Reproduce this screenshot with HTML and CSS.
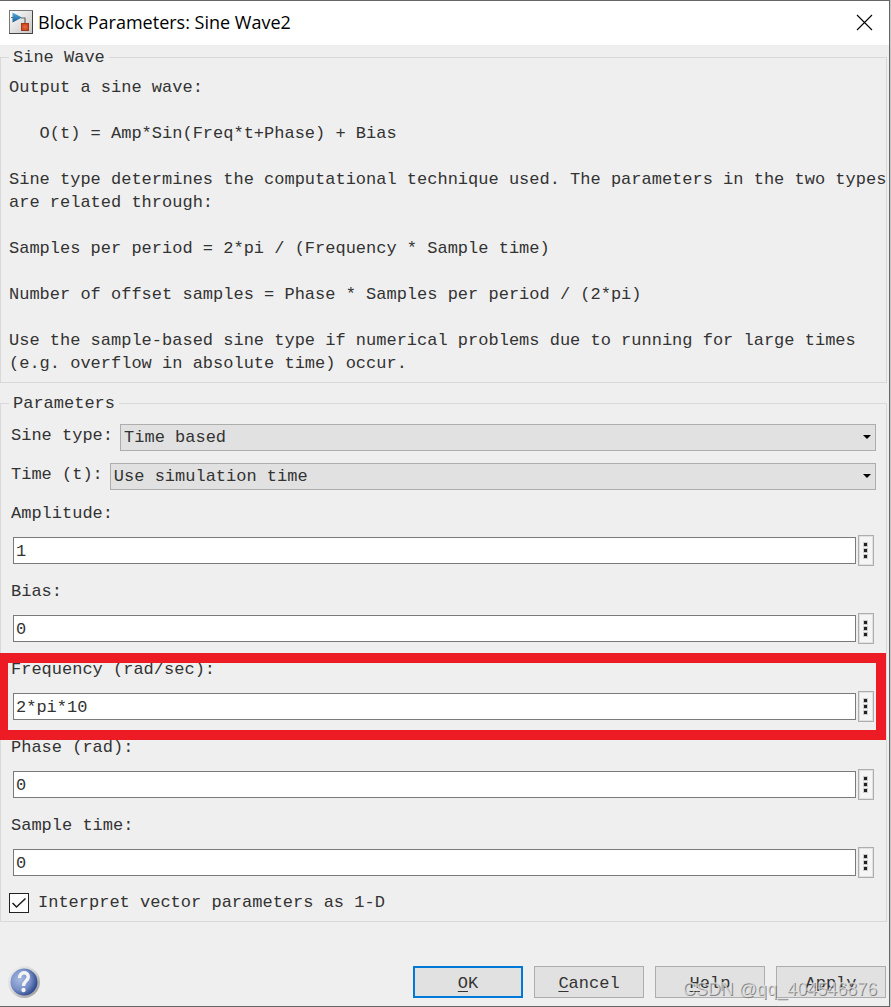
FILE: index.html
```html
<!DOCTYPE html>
<html lang="en">
<head>
    <meta charset="UTF-8">
    <meta name="viewport" content="width=device-width, initial-scale=1.0">
    <link rel="stylesheet" href="styles.css">
    <title>Block Parameters: Sine Wave2</title>
</head>
<body>
    <div class="window">
        <header class="titlebar">
            <svg class="app-icon" width="24" height="24" viewBox="0 0 24 24">
                <defs>
                    <linearGradient id="paper" x1="0" y1="0" x2="1" y2="1">
                        <stop offset="0" stop-color="#ffffff"/>
                        <stop offset="1" stop-color="#c4c4c4"/>
                    </linearGradient>
                    <linearGradient id="tri" x1="0" y1="0" x2="0" y2="1">
                        <stop offset="0" stop-color="#57aedb"/>
                        <stop offset="1" stop-color="#135b92"/>
                    </linearGradient>
                    <radialGradient id="block">
                        <stop offset="0" stop-color="#ee6a3c"/>
                        <stop offset="1" stop-color="#c8451c"/>
                    </radialGradient>
                </defs>
                <rect x="0.5" y="0.5" width="23" height="23" fill="url(#paper)" stroke="#777"/>
                <path d="M0 23.5H23.5V1" fill="none" stroke="#444"/>
                <path d="M2 7.500H4M12 8H16V13" fill="none" stroke="#666" stroke-width="1.200"/>
                <path d="M3.500 2.500L13 7.500L3.500 12.500Z" fill="url(#tri)"/>
                <rect x="12.500" y="13.500" width="7" height="7" fill="url(#block)" stroke="#a33a18"/>
            </svg>
            <h1 class="title">Block Parameters: Sine Wave2</h1>
            <button class="close" type="button" aria-label="Close">
                <svg width="17" height="17" viewBox="0 0 17 17">
                    <path d="M1 1L16 16M16 1L1 16" stroke="#000" stroke-width="1.100"/>
                </svg>
            </button>
        </header>

        <form class="dialog">
            <fieldset class="group">
                <legend>Sine Wave</legend>
                <p class="description">Output a sine wave:

   O(t) = Amp*Sin(Freq*t+Phase) + Bias

Sine type determines the computational technique used. The parameters in the two types
are related through:

Samples per period = 2*pi / (Frequency * Sample time)

Number of offset samples = Phase * Samples per period / (2*pi)

Use the sample-based sine type if numerical problems due to running for large times
(e.g. overflow in absolute time) occur.</p>
            </fieldset>

            <fieldset class="group params">
                <legend>Parameters</legend>
                <div class="choice">
                    <label for="sinetype">Sine type:</label>
                    <div class="dropdown">
                        <select id="sinetype">
                            <option>Time based</option>
                        </select>
                    </div>
                </div>
                <div class="choice">
                    <label for="time">Time (t):</label>
                    <div class="dropdown">
                        <select id="time">
                            <option>Use simulation time</option>
                        </select>
                    </div>
                </div>

                <div class="field">
                    <label for="amplitude">Amplitude:</label>
                    <div class="entry">
                        <input type="text" id="amplitude" value="1">
                        <button class="more" type="button" aria-label="Amplitude options"><i></i><i></i><i></i></button>
                    </div>
                </div>
                <div class="field">
                    <label for="bias">Bias:</label>
                    <div class="entry">
                        <input type="text" id="bias" value="0">
                        <button class="more" type="button" aria-label="Bias options"><i></i><i></i><i></i></button>
                    </div>
                </div>
                <div class="field marked">
                    <label for="frequency">Frequency (rad/sec):</label>
                    <div class="entry">
                        <input type="text" id="frequency" value="2*pi*10">
                        <button class="more" type="button" aria-label="Frequency options"><i></i><i></i><i></i></button>
                    </div>
                </div>
                <div class="field">
                    <label for="phase">Phase (rad):</label>
                    <div class="entry">
                        <input type="text" id="phase" value="0">
                        <button class="more" type="button" aria-label="Phase options"><i></i><i></i><i></i></button>
                    </div>
                </div>
                <div class="field">
                    <label for="sampletime">Sample time:</label>
                    <div class="entry">
                        <input type="text" id="sampletime" value="0">
                        <button class="more" type="button" aria-label="Sample time options"><i></i><i></i><i></i></button>
                    </div>
                </div>

                <div class="check">
                    <span class="box">
                        <input type="checkbox" id="interpret" checked>
                        <svg class="tick" width="20" height="20" viewBox="0 0 20 20">
                            <path d="M3.500 10L7.500 14L16.500 5.500" fill="none" stroke="#222" stroke-width="1.600"/>
                        </svg>
                    </span>
                    <label for="interpret">Interpret vector parameters as 1-D</label>
                </div>
            </fieldset>

            <footer class="actions">
                <button class="info" type="button" aria-label="About this block">
                    <svg width="34" height="34" viewBox="0 0 34 34">
                        <defs>
                            <linearGradient id="rim" x1="0" y1="0" x2="1" y2="1">
                                <stop offset="0" stop-color="#f4f4f4"/>
                                <stop offset="0.5" stop-color="#d4d4d4"/>
                                <stop offset="1" stop-color="#8d8d8d"/>
                            </linearGradient>
                            <radialGradient id="ball" cx="0.35" cy="0.4" r="0.65">
                                <stop offset="0" stop-color="#a9bbe0"/>
                                <stop offset="0.6" stop-color="#7890c8"/>
                                <stop offset="1" stop-color="#2f4a8e"/>
                            </radialGradient>
                        </defs>
                        <circle cx="17" cy="17" r="16" fill="url(#rim)"/>
                        <circle cx="17" cy="17" r="13.500" fill="url(#ball)"/>
                        <path d="M12.500 13C12.500 6 21.500 6.500 21.300 12C21 16 16.500 16 16.500 21" fill="none" stroke="#f4f4f4" stroke-width="3.400"/>
                        <circle cx="16.500" cy="25" r="2.200" fill="#f4f4f4"/>
                    </svg>
                </button>
                <button class="btn default" type="button"><span><u>O</u>K</span></button>
                <button class="btn" type="button"><span><u>C</u>ancel</span></button>
                <button class="btn" type="button"><span><u>H</u>elp</span></button>
                <button class="btn" type="button"><span><u>A</u>pply</span></button>
                <span class="watermark">CSDN @qq_404546876</span>
            </footer>
        </form>
    </div>
</body>
</html>
```
FILE: styles.css
```css
*{
    box-sizing: border-box;
}
body{
    margin: 0;
    background: #c8c8c8;
    color: #333;
    font: 17px/23px "Liberation Mono", monospace;
}
input, select, button{
    font: inherit;
    color: inherit;
    border-radius: 0;
}
svg{
    display: block;
}

.window{
    display: flex;
    flex-direction: column;
    min-height: 100vh;
    margin-right: 1px;
    background: #efefef;
    border: 1px solid #666;
    border-left: 0;
}

/* Title bar */
.titlebar{
    display: flex;
    align-items: center;
    gap: 5px;
    height: 44px;
    padding: 0 16px 2px 9px;
    background: #fff;
}
.title{
    flex: 1;
    margin: 0;
    color: #000;
    font: 18px/24px "Open Sans", sans-serif;
}
.close{
    padding: 0;
    border: 0;
    background: none;
}

/* Group boxes */
.dialog{
    display: flex;
    flex-direction: column;
    flex: 1;
    padding: 1px 2px 0 0;
}
.group{
    min-width: 0;
    margin: 0 0 9px;
    padding: 7px 8px;
    border: 1px solid #d9d9d9;
}
legend{
    padding: 0 4px;
}
.description{
    margin: 0;
    white-space: pre;
}
.params{
    position: relative;
    margin: 0;
    padding: 9px 10px 7px 8px;
}
.choice{
    display: flex;
    gap: 7px;
    height: 27px;
    margin-bottom: 12px;
    padding-left: 2px;
}
.dropdown{
    position: relative;
    flex: 1;
}
.dropdown::after{
    content: "";
    position: absolute;
    top: 11px;
    right: 5px;
    border: 4px solid transparent;
    border-top-color: #000;
    border-bottom: 0;
    pointer-events: none;
}
select{
    appearance: none;
    width: 100%;
    height: 27px;
    padding: 0 3px;
    background: #e1e1e1;
    border: 1px solid #adadad;
}

/* Text fields */
.field{
    margin-bottom: 14px;
    padding-left: 2px;
}
.field label{
    display: block;
    margin-bottom: 10px;
}
.entry{
    display: flex;
    align-items: center;
    gap: 2px;
    padding: 0 2px;
}
.entry input{
    flex: 1;
    min-width: 0;
    height: 27px;
    padding: 2px 2px 0;
    background: #fff;
    border: 1px solid #7a7a7a;
}
.more{
    display: flex;
    flex-direction: column;
    align-items: center;
    justify-content: center;
    gap: 3px;
    width: 16px;
    height: 31px;
    padding: 0 1px 0 0;
    background: #f5f5f5;
    border: 1px solid #adadad;
    box-shadow: inset 0 0 0 1px #e1e1e1;
}
.more i{
    width: 3px;
    height: 3px;
    background: #222;
    outline: 1px solid #ccc;
}
.marked{
    position: relative;
}
.marked::after{
    content: "";
    position: absolute;
    top: -5px;
    right: -10px;
    bottom: -18px;
    left: -9px;
    border: 10px solid #ed1c24;
    border-left-width: 8px;
    pointer-events: none;
}

.check{
    display: flex;
    align-items: center;
    gap: 9px;
    margin-top: -1px;
}
.box{
    position: relative;
    width: 20px;
    height: 20px;
}
.box input{
    display: block;
    appearance: none;
    width: 20px;
    height: 20px;
    margin: 0;
    background: #fff;
    border: 1px solid #222;
}
.tick{
    position: absolute;
    top: 0;
    left: 0;
    visibility: hidden;
    pointer-events: none;
}
.box input:checked + .tick{
    visibility: visible;
}

/* Bottom buttons */
.actions{
    position: relative;
    display: flex;
    align-items: center;
    gap: 11px;
    margin-top: auto;
    padding: 0 1px 7px 7px;
}
.info{
    margin-right: auto;
    padding: 0;
    border: 0;
    background: none;
}
.btn{
    width: 110px;
    height: 32px;
    padding: 2px 0 0;
    background: #e1e1e1;
    border: 1px solid #adadad;
}
.btn u{
    text-underline-offset: 3px;
}
.default{
    border: 2px solid #0078d7;
}
.watermark{
    position: absolute;
    right: 10px;
    bottom: 6px;
    color: rgba(225, 225, 225, 0.8);
    font: 18px/22px "Liberation Sans", sans-serif;
    text-shadow: 1px 1px 0 rgba(110, 110, 110, 0.8);
    pointer-events: none;
}
```
